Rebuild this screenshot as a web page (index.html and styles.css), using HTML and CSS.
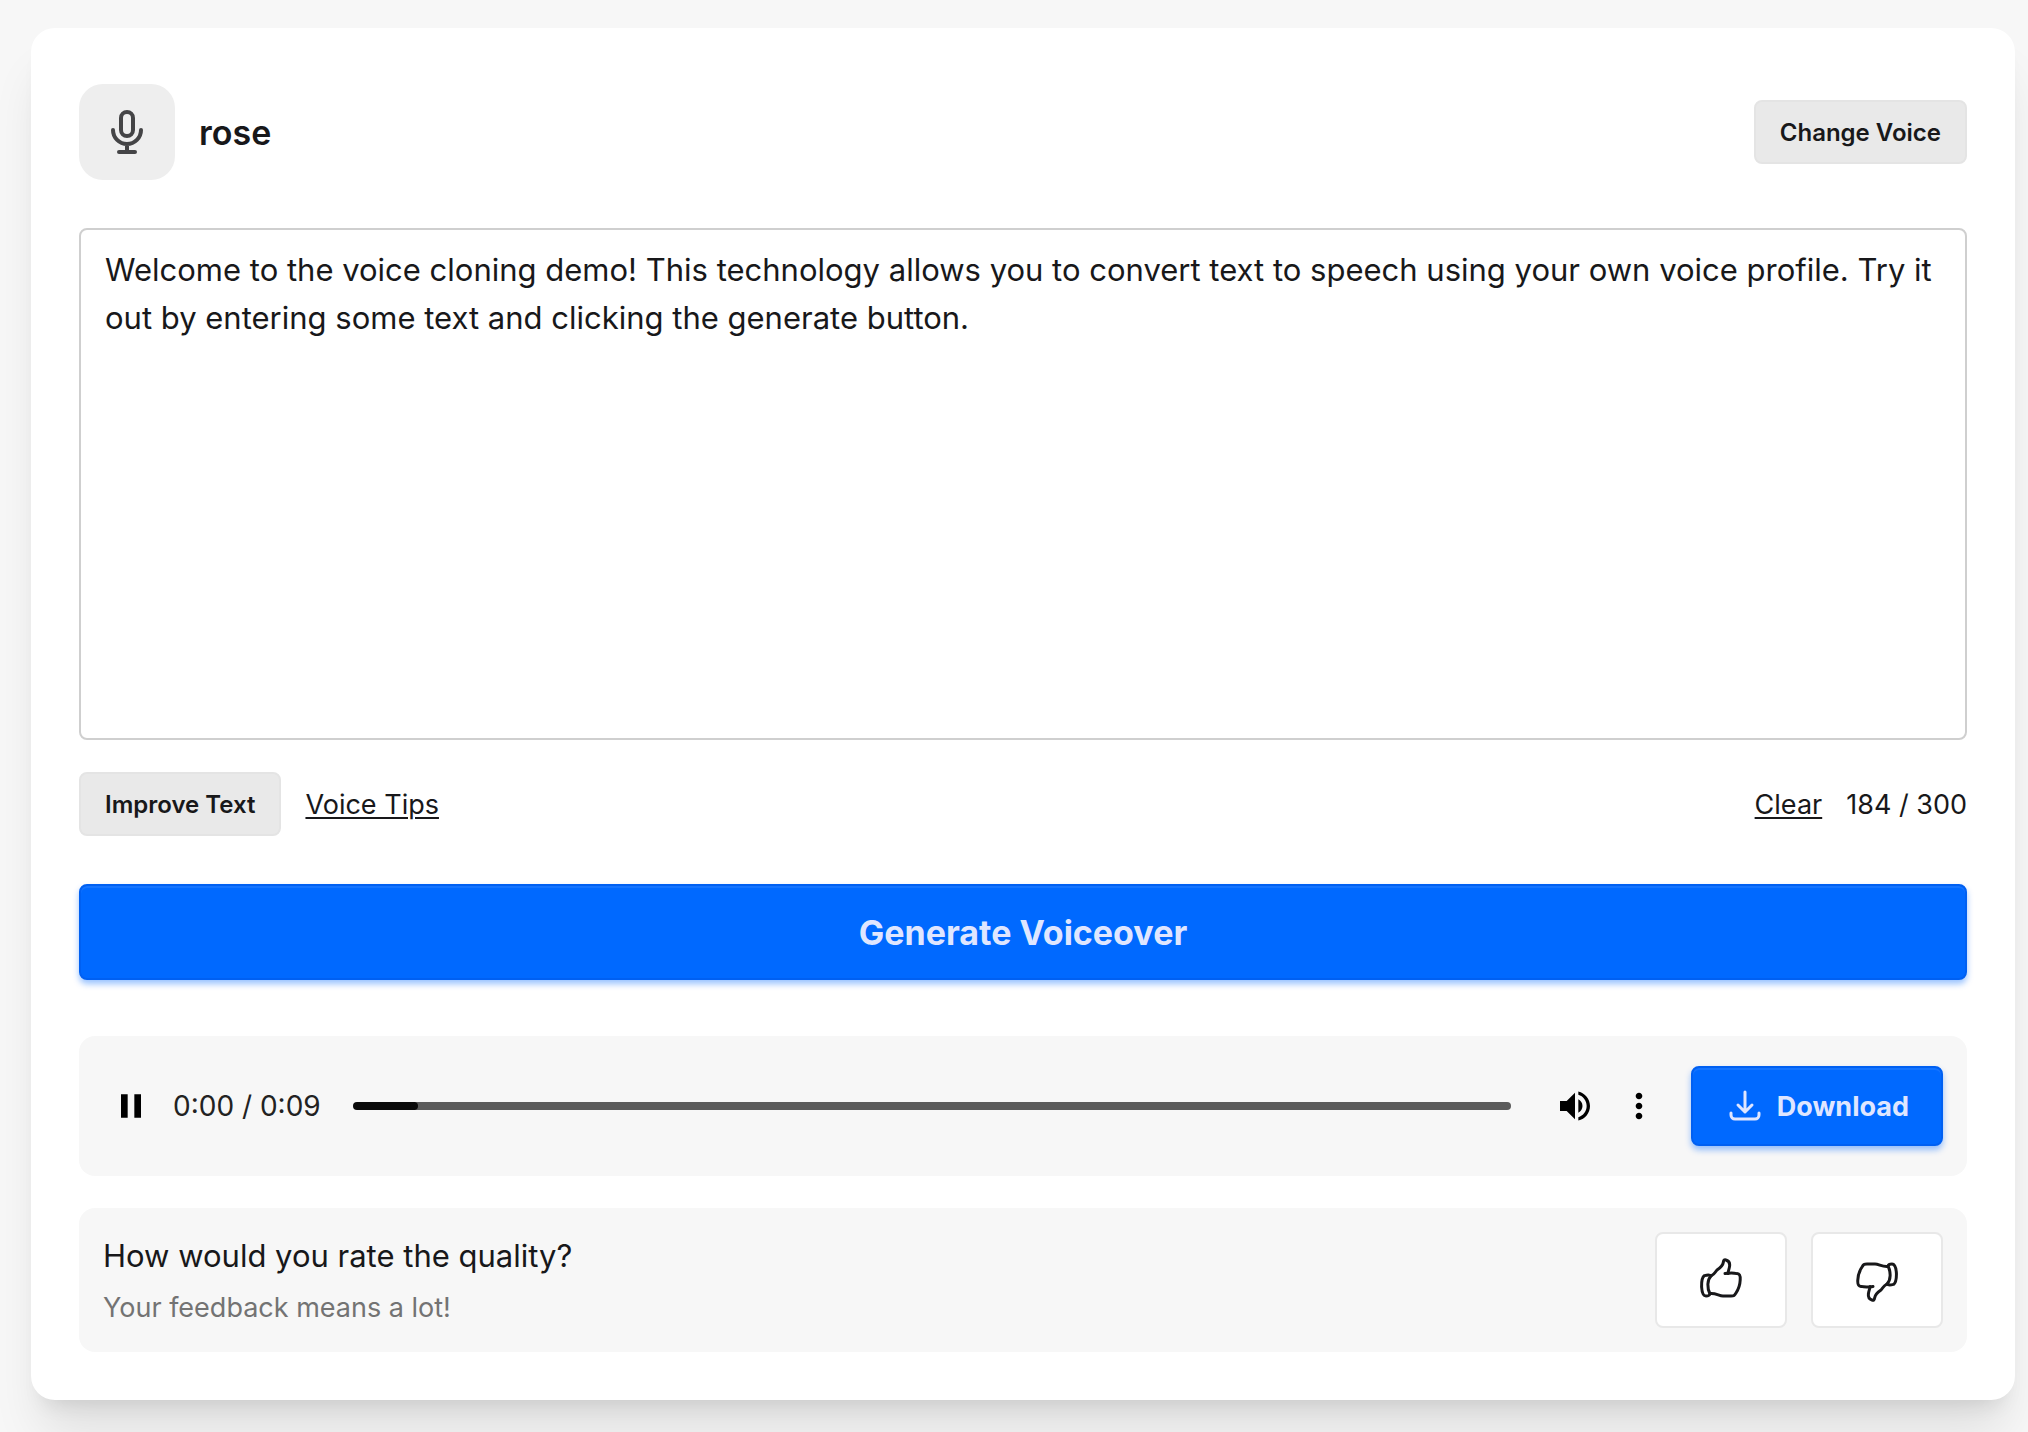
FILE: index.html
```html
<!DOCTYPE html>
<html lang="en">
<head>
  <meta charset="UTF-8">
  <title>Voice Cloning Demo</title>
  <meta name="viewport" content="width=device-width, initial-scale=1.0">
  <link rel="stylesheet" href="styles.css">
</head>
<body>

  <main class="card">

    <header class="voice-header">
      <div class="voice-icon">
        <svg viewBox="0 0 48 48" aria-hidden="true">
          <rect x="18" y="4" width="12" height="24" rx="6"/>
          <path d="M10 22a14 14 0 0 0 28 0M24 36v8M16 44h16"/>
        </svg>
      </div>
      <h1 class="voice-name">rose</h1>
      <button type="button" class="btn-secondary">Change Voice</button>
    </header>

    <textarea class="script-input" rows="10" maxlength="300" aria-label="Voiceover text">Welcome to the voice cloning demo! This technology allows you to convert text to speech using your own voice profile. Try it out by entering some text and clicking the generate button.</textarea>

    <div class="toolbar">
      <button type="button" class="btn-secondary">Improve Text</button>
      <a href="#" class="link">Voice Tips</a>
      <button type="button" class="link clear">Clear</button>
      <span class="counter">184 / 300</span>
    </div>

    <button type="button" class="btn-primary generate">Generate Voiceover</button>

    <section class="player">
      <button type="button" class="player-btn" aria-label="Pause">
        <svg viewBox="0 0 24 24"><path d="M6 19h4V5H6v14zm8-14v14h4V5h-4z"/></svg>
      </button>
      <span class="time">0:00 / 0:09</span>
      <input type="range" class="seek" min="0" max="1000" value="50" aria-label="Seek">
      <button type="button" class="player-btn" aria-label="Mute">
        <svg viewBox="0 0 24 24"><path d="M3 9v6h4l5 5V4L7 9H3zm13.5 3c0-1.77-1.02-3.29-2.5-4.03v8.05c1.48-.73 2.5-2.25 2.5-4.02zM14 3.23v2.06c2.89.86 5 3.54 5 6.71s-2.11 5.85-5 6.71v2.06c4.01-.91 7-4.49 7-8.77s-2.99-7.86-7-8.77z"/></svg>
      </button>
      <button type="button" class="player-btn" aria-label="More options">
        <svg viewBox="0 0 24 24"><path d="M12 8c1.1 0 2-.9 2-2s-.9-2-2-2-2 .9-2 2 .9 2 2 2zm0 2c-1.1 0-2 .9-2 2s.9 2 2 2 2-.9 2-2-.9-2-2-2zm0 6c-1.1 0-2 .9-2 2s.9 2 2 2 2-.9 2-2-.9-2-2-2z"/></svg>
      </button>
      <button type="button" class="btn-primary download">
        <svg viewBox="0 0 32 32" aria-hidden="true">
          <path d="M16 2v20M9 15l7 7 7-7M2 23v2a4 4 0 0 0 4 4h20a4 4 0 0 0 4-4v-2"/>
        </svg>
        Download
      </button>
    </section>

    <section class="rating">
      <div class="rating-text">
        <h2>How would you rate the quality?</h2>
        <p>Your feedback means a lot!</p>
      </div>
      <button type="button" class="btn-rate" aria-label="Thumbs up">
        <svg viewBox="0 0 48 48">
          <path d="M14 20C18 18 18 16 20 14C23 12 26 9 26.400 6C26.500 4 27.500 3.400 29 4C32 5 33 7 32.600 10C32.400 13 31 15 31 17.600"/>
          <path d="M28 17.600C32 17 37 17 40 17.600C43 18 43.500 20 43.200 24C43 29 41 34 39 37C37.500 39.500 37 40 34 40H26C22 40 19 37 13 37.600"/>
          <path d="M14 20C10 24 10 32 13 38C12.500 40 11 40 9 40C6 40 5 37 4.600 31C4.400 25 5.500 21 7.500 19.600C10 19 13 18.600 14 20"/>
        </svg>
      </button>
      <button type="button" class="btn-rate thumbs-down" aria-label="Thumbs down">
        <svg viewBox="0 0 48 48">
          <path d="M14 20C18 18 18 16 20 14C23 12 26 9 26.400 6C26.500 4 27.500 3.400 29 4C32 5 33 7 32.600 10C32.400 13 31 15 31 17.600"/>
          <path d="M28 17.600C32 17 37 17 40 17.600C43 18 43.500 20 43.200 24C43 29 41 34 39 37C37.500 39.500 37 40 34 40H26C22 40 19 37 13 37.600"/>
          <path d="M14 20C10 24 10 32 13 38C12.500 40 11 40 9 40C6 40 5 37 4.600 31C4.400 25 5.500 21 7.500 19.600C10 19 13 18.600 14 20"/>
        </svg>
      </button>
    </section>

  </main>

</body>
</html>
```
FILE: styles.css
```css
* {
  margin: 0;
  padding: 0;
  box-sizing: border-box;
}

body {
  min-height: 100vh;
  padding: 28px 13px 32px 31px;
  font-family: Inter, 'Liberation Sans', sans-serif;
  font-size: 27px;
  color: #18181a;
  background: #f7f7f7;
}

button, textarea {
  font: inherit;
  color: inherit;
}

button {
  border: none;
  background: none;
  cursor: pointer;
}

.card {
  display: flex;
  flex-direction: column;
  padding: 56px 48px 48px;
  border-radius: 24px;
  background: #fff;
  box-shadow: 0 40px 50px -10px rgba(0,0,0,0.1), 0 16px 20px -12px rgba(0,0,0,0.1);
}

/* Header */
.voice-header {
  display: flex;
  align-items: center;
  gap: 24px;
  margin-bottom: 48px;
}

.voice-icon {
  display: grid;
  place-items: center;
  width: 96px;
  height: 96px;
  border-radius: 24px;
  background: #eee;
}

.voice-icon svg {
  width: 48px;
  height: 48px;
  fill: none;
  stroke: #444446;
  stroke-width: 4;
  stroke-linecap: round;
}

.voice-name {
  flex: 1;
  font-size: 34px;
  font-weight: 600;
}

/* Buttons */
.btn-secondary {
  height: 64px;
  padding: 0 24px;
  border: 2px solid #e4e4e4;
  border-radius: 8px;
  font-size: 24px;
  font-weight: 600;
  background: #e9e9e9;
}

.btn-primary {
  border: 2px solid #0060f2;
  border-radius: 8px;
  font-weight: 700;
  color: #dfe6ff;
  background: #0069ff;
  box-shadow: 0 4px 6px rgba(0,105,255,0.4), inset 0 2px 0 #1474ff;
}

/* Text area */
.script-input {
  display: block;
  width: 100%;
  padding: 16px 24px 12px;
  border: 2px solid #cfcfcf;
  border-radius: 8px;
  font-size: 31px;
  line-height: 48px;
  resize: none;
  outline: none;
  background: #fff;
}

.toolbar {
  display: flex;
  align-items: center;
  gap: 24px;
  margin: 32px 0 48px;
}

.link {
  color: inherit;
  text-decoration: underline;
  text-decoration-thickness: 2px;
  text-underline-offset: 3px;
}

.clear {
  margin-left: auto;
}

.generate {
  height: 96px;
  font-size: 34px;
}

/* Audio player */
.player {
  display: flex;
  align-items: center;
  min-height: 140px;
  margin: 56px 0 32px;
  padding: 16px 24px 16px 32px;
  border-radius: 16px;
  background: #f7f7f7;
}

.player-btn {
  width: 40px;
  height: 40px;
}

.player-btn + .player-btn {
  margin-left: 24px;
}

.player-btn svg {
  display: block;
  width: 40px;
  height: 40px;
  fill: #000;
}

.time {
  margin: 0 32px 0 22px;
  font-size: 28px;
  color: #222;
}

.seek {
  flex: 1;
  min-width: 0;
  height: 8px;
  margin-right: 44px;
  border-radius: 4px;
  appearance: none;
  background: linear-gradient(#0a0a0a, #0a0a0a) 0 / 62px 100% no-repeat #5b5b5b;
}

.seek::-webkit-slider-thumb {
  appearance: none;
  width: 8px;
  height: 8px;
  border-radius: 4px;
  background: #0a0a0a;
}

.download {
  display: flex;
  align-items: center;
  gap: 16px;
  height: 80px;
  margin-left: 32px;
  padding: 0 32px 0 36px;
}

.download svg {
  width: 32px;
  height: 32px;
  fill: none;
  stroke: currentColor;
  stroke-width: 3;
  stroke-linecap: round;
  stroke-linejoin: round;
}

/* Rating */
.rating {
  display: flex;
  align-items: center;
  gap: 24px;
  padding: 24px;
  border-radius: 16px;
  background: #f7f7f7;
}

.rating-text {
  flex: 1;
}

.rating-text h2 {
  font-size: 31px;
  font-weight: 400;
  line-height: 48px;
}

.rating-text p {
  margin-top: 8px;
  line-height: 40px;
  color: #737373;
}

.btn-rate {
  display: grid;
  place-items: center;
  width: 132px;
  height: 96px;
  border: 2px solid #e8e8e8;
  border-radius: 8px;
  background: #fff;
}

.btn-rate svg {
  width: 48px;
  height: 48px;
  fill: none;
  stroke: #18181a;
  stroke-width: 3;
  stroke-linecap: round;
  stroke-linejoin: round;
}

.thumbs-down svg {
  transform: rotate(180deg);
}
```
